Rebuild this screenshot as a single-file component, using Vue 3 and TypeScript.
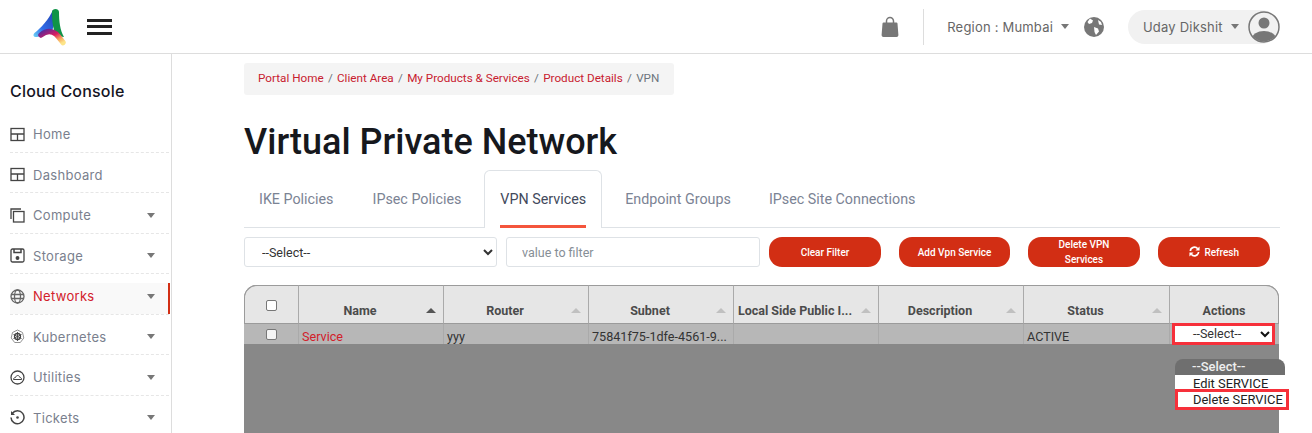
<template>
  <div class="page">
    <header class="topbar">
      <div class="brand">
        <svg class="logo" width="36" height="38" viewBox="0 0 36 38" fill="none" stroke-linecap="round">
          <defs>
            <linearGradient id="lgBlue" x1="0" y1="1" x2="1" y2="0">
              <stop offset="0" stop-color="#6fd6f7" />
              <stop offset=".35" stop-color="#2f6be8" />
              <stop offset="1" stop-color="#1f3fa8" />
            </linearGradient>
            <linearGradient id="lgRed" x1="0" y1="0" x2="1" y2="1">
              <stop offset="0" stop-color="#5b2a9a" />
              <stop offset=".45" stop-color="#d81b60" />
              <stop offset=".75" stop-color="#f7a35c" />
              <stop offset="1" stop-color="#fde58a" />
            </linearGradient>
          </defs>
          <path d="M21 2C17 11 9 20 2.500 25c-2 2-1 4.500 2.500 4 5-1 10-4 15-6L25 8z" fill="url(#lgBlue)" />
          <path d="M20 4c0-4 7-4 7 0 0 9 1 18 5 25l-7-1c-4-5-5-15-5-24z" fill="#0f9448" />
          <path d="M9 27C15 22 20 23 24 26 27 29 29 32 31 34.500" stroke="url(#lgRed)" stroke-width="5.500" />
        </svg>
        <div class="burger"><span></span><span></span><span></span></div>
      </div>
      <div class="topright">
        <svg class="bag" width="18" height="22" viewBox="0 0 18 22">
          <path d="M5.500 7V5a3.500 3.500 0 0 1 7 0v2" fill="none" stroke="#777" stroke-width="1.500" />
          <path d="M2.600 6.500h12.800c.6 0 1 .4 1.100 1l.9 11.600c0 1.200-.8 1.900-1.800 1.900H2.400c-1 0-1.800-.7-1.800-1.900l.9-11.600c.1-.6.500-1 1.100-1z" fill="#777" />
        </svg>
        <div class="vline"></div>
        <span class="region">Region : Mumbai</span>
        <i class="caret"></i>
        <svg class="earth" width="20" height="20" viewBox="0 0 20 20">
          <circle cx="10" cy="10" r="10" fill="#777" />
          <path d="M6 1.500 9 3.500 8 6 5 7 3.500 5zM10 10l4 1.500 1 3-3 3.500-1.500-3zM14 3l3 2 1 3-3-.5z" fill="#fff" />
        </svg>
        <div class="userpill">
          <span class="username">Uday Dikshit</span>
          <i class="caret"></i>
          <svg class="avatar" width="32" height="32" viewBox="0 0 32 32">
            <defs><clipPath id="avatarClip"><circle cx="16" cy="16" r="14.500" /></clipPath></defs>
            <circle cx="16" cy="16" r="15" fill="#f1f1f1" stroke="#777" stroke-width="1.500" />
            <circle cx="16" cy="12" r="5.500" fill="#777" />
            <ellipse cx="16" cy="28" rx="12" ry="8" fill="#777" clip-path="url(#avatarClip)" />
          </svg>
        </div>
      </div>
    </header>

    <div class="body">
      <aside class="sidebar">
        <h4 class="side-title">Cloud Console</h4>
        <ul class="nav">
          <li v-for="item in navItems" :key="item.label" :class="{ active: item.active }">
            <svg class="nav-icon" width="15" height="15" viewBox="0 0 15 15" fill="none" stroke="#444" stroke-width="1.300" v-html="item.icon"></svg>
            <span class="nav-label">{{ item.label }}</span>
            <i v-if="item.caret" class="caret"></i>
          </li>
        </ul>
      </aside>

      <main class="content">
        <nav class="crumbs">
          <template v-for="(c, i) in crumbs" :key="c">
            <span :class="i < crumbs.length - 1 ? 'crumb-link' : 'crumb-last'">{{ c }}</span>
            <span v-if="i < crumbs.length - 1" class="crumb-sep">/</span>
          </template>
        </nav>

        <h1 class="title">Virtual Private Network</h1>

        <div class="tabs">
          <div v-for="t in tabs" :key="t" class="tab" :class="{ current: t === 'VPN Services' }">
            <span>{{ t }}</span>
          </div>
        </div>

        <div class="filters">
          <select class="filter-select"><option>--Select--</option></select>
          <input class="filter-input" type="text" placeholder="value to filter" />
          <button class="btn">Clear Filter</button>
          <button class="btn">Add Vpn Service</button>
          <button class="btn">Delete VPN<br />Services</button>
          <button class="btn">
            <svg width="11" height="11" viewBox="0 0 12 12" fill="none" stroke="#fff" stroke-width="1.800">
              <path d="M1.500 5.500A4.500 4.500 0 0 1 9.500 3" />
              <path d="M10.500 6.500A4.500 4.500 0 0 1 2.500 9" />
              <path d="M11.500 .5v4.500H7z" fill="#fff" stroke="none" />
              <path d="M.5 11.500V7H5z" fill="#fff" stroke="none" />
            </svg>
            Refresh
          </button>
        </div>

        <div class="grid-wrap">
          <table class="grid">
            <colgroup>
              <col v-for="(w, i) in colWidths" :key="i" :style="{ width: w + 'px' }" />
            </colgroup>
            <thead>
              <tr>
                <th class="check-cell"><span class="check"></span></th>
                <th v-for="h in headers" :key="h.label" :class="{ sortable: h.sort }">
                  <span class="th-text">{{ h.label }}</span>
                  <i v-if="h.sort" class="sort" :class="{ on: h.on }"></i>
                </th>
              </tr>
            </thead>
            <tbody>
              <tr>
                <td class="check-cell"><span class="check"></span></td>
                <td class="svc">Service</td>
                <td>yyy</td>
                <td>75841f75-1dfe-4561-9...</td>
                <td></td>
                <td></td>
                <td>ACTIVE</td>
                <td class="action-cell">
                  <div class="action-select">
                    <span>--Select--</span>
                    <svg width="10" height="7" viewBox="0 0 10 7" fill="none" stroke="#111" stroke-width="2"><path d="M1 1l4 4 4-4" /></svg>
                  </div>
                </td>
              </tr>
            </tbody>
          </table>
          <div class="popup">
            <div class="popup-head">--Select--</div>
            <div class="popup-item">Edit SERVICE</div>
            <div class="popup-item marked">Delete SERVICE</div>
          </div>
        </div>
      </main>
    </div>
  </div>
</template>

<script setup lang="ts">
type NavItem = {
  label: string
  icon: string
  caret?: boolean
  active?: boolean
}

const quilt = '<rect x="1" y="1.500" width="13" height="12" /><path d="M1 7h13M7.500 7v6.500" />'

const navItems: NavItem[] = [
  { label: 'Home', icon: quilt },
  { label: 'Dashboard', icon: quilt },
  { label: 'Compute', caret: true, icon: '<rect x="3.500" y="3.500" width="10.500" height="10.500" /><path d="M1 11V1h10" />' },
  { label: 'Storage', caret: true, icon: '<rect x="1" y="1" width="13" height="13" rx="1.500" /><path d="M4 1v3.500h7V1" stroke-width="1.500" /><circle cx="7.500" cy="10" r="1.300" fill="#444" />' },
  { label: 'Networks', caret: true, active: true, icon: '<circle cx="7.500" cy="7.500" r="6.500" stroke="#666" /><ellipse cx="7.500" cy="7.500" rx="3" ry="6.500" stroke="#666" /><path d="M1 5.500h13M1 9.500h13" stroke="#666" />' },
  { label: 'Kubernetes', caret: true, icon: '<path d="M7.500 1l5 2.500 1.300 5.500-3.500 4.500H4.700L1.200 9l1.300-5.500z" stroke-width=".8" stroke="#777" /><circle cx="7.500" cy="7.500" r="3" /><path d="M7.500 3v9M3.500 5.500l8 4M11.500 5.500l-8 4" stroke-width=".9" />' },
  { label: 'Utilities', caret: true, icon: '<circle cx="7.500" cy="7.500" r="6.500" /><path d="M3.500 9.500c0-1.500 1-2 2-2 .3-1.200 1.200-2 2.200-2s2 .8 2.200 2c1 0 1.800.7 1.800 2z" stroke-width="1" />' },
  { label: 'Tickets', caret: true, icon: '<path d="M2.200 3.500A6.500 6.500 0 1 1 1 7.500" stroke-width="1.500" /><path d="M1 1v4h4z" fill="#444" stroke="none" /><circle cx="7.500" cy="7.500" r="1.300" fill="#444" stroke="none" />' },
]

const crumbs = ['Portal Home', 'Client Area', 'My Products & Services', 'Product Details', 'VPN']
const tabs = ['IKE Policies', 'IPsec Policies', 'VPN Services', 'Endpoint Groups', 'IPsec Site Connections']
const colWidths = [55, 145, 145, 145, 145, 145, 146, 109]
const headers = [
  { label: 'Name', sort: true, on: true },
  { label: 'Router', sort: true },
  { label: 'Subnet', sort: true },
  { label: 'Local Side Public I...', sort: true },
  { label: 'Description', sort: true },
  { label: 'Status', sort: true },
  { label: 'Actions', sort: false },
]
</script>

<style>
html,
body {
  margin: 0;
  background: #fff;
  overflow: hidden;
}
</style>

<style scoped>
* {
  box-sizing: border-box;
}

.page {
  height: 433px;
  overflow: hidden;
  font-family: Roboto, "Liberation Sans", sans-serif;
  display: flex;
  flex-direction: column;
}

.topbar {
  height: 54px;
  flex: none;
  border-bottom: 1px solid #ddd;
  display: flex;
  align-items: center;
  justify-content: space-between;
  padding: 0 34px 0 32px;
}

.brand {
  display: flex;
  align-items: center;
  gap: 19px;
}

.logo {
  margin-top: 1px;
}

.burger {
  width: 25px;
  display: flex;
  flex-direction: column;
  gap: 3.500px;
}

.burger span {
  height: 3px;
  background: #222;
}

.topright {
  display: flex;
  align-items: center;
  font-family: Inter, sans-serif;
  font-size: 13px;
  letter-spacing: .2px;
  color: #666;
}

.bag {
  margin-right: 24px;
}

.vline {
  width: 1px;
  height: 36px;
  background: #ddd;
  margin-right: 23px;
}

.region {
  margin-right: 8px;
  white-space: nowrap;
}

.earth {
  margin-left: 15px;
  margin-right: 24px;
}

.userpill {
  height: 34px;
  width: 150px;
  background: #f1f1f1;
  border-radius: 17px;
  display: flex;
  align-items: center;
  padding-left: 15px;
  gap: 8px;
}

.username {
  white-space: nowrap;
}

.avatar {
  flex: none;
  margin-left: 1px;
}

.caret {
  display: inline-block;
  flex: none;
  width: 0;
  height: 0;
  border-left: 4.500px solid transparent;
  border-right: 4.500px solid transparent;
  border-top: 5px solid #777;
}

.body {
  flex: 1;
  display: flex;
  min-height: 0;
}

.sidebar {
  width: 172px;
  flex: none;
  border-right: 1px solid #ddd;
  padding: 28px 2px 0 10px;
}

.side-title {
  margin: 0 0 11px;
  font-family: Inter, sans-serif;
  font-size: 16px;
  font-weight: 500;
  letter-spacing: .2px;
  line-height: 19px;
  color: #15151f;
}

.nav {
  list-style: none;
  margin: 0;
  padding: 0;
}

.nav li {
  height: 40.500px;
  display: flex;
  align-items: center;
  border-bottom: 1px dashed #e6e6e6;
  padding-top: 5px;
  position: relative;
  font-family: Inter, sans-serif;
  font-size: 13px;
  letter-spacing: .3px;
  color: #7a7f8e;
}

.nav li.active {
  color: #d2202a;
}

.nav li.active::before {
  content: "";
  position: absolute;
  left: 0;
  right: -1px;
  top: 9px;
  bottom: 0;
  background: #f9f9f9;
  border-right: 2px solid #d22e14;
}

.nav-icon {
  position: relative;
  margin-right: 8px;
  flex: none;
}

.nav-label {
  position: relative;
  flex: 1;
}

.nav li .caret {
  position: relative;
  margin-right: 14px;
}

.content {
  flex: 1;
  min-width: 0;
  padding: 9px 33px 0 72px;
}

.crumbs {
  height: 32px;
  width: 430px;
  background: #f4f4f4;
  border-radius: 3px;
  padding: 0 14px 2px;
  display: flex;
  align-items: center;
  font-size: 11.700px;
  white-space: nowrap;
}

.crumb-link {
  color: #c8202f;
}

.crumb-last {
  color: #6c757d;
}

.crumb-sep {
  color: #6c757d;
  margin: 0 4.300px;
}

.title {
  margin: 29px 0 9px;
  font-size: 36px;
  line-height: 37px;
  font-weight: 500;
  color: #16181d;
}

.tabs {
  display: flex;
  height: 58px;
  margin-right: -1px;
  border-bottom: 1px solid #dee2e6;
}

.tab {
  display: flex;
  align-items: center;
  height: 57px;
  padding: 0 15px;
  margin-right: 8px;
  font-size: 14.300px;
  color: #7b8394;
  white-space: nowrap;
}

.tab:first-child {
  margin-right: 9px;
}

.tab.current {
  height: 58px;
  position: relative;
  color: #434a5c;
  background: #fff;
  border: 1px solid #dee2e6;
  border-bottom: 0;
  border-radius: 6px 6px 0 0;
  padding-bottom: 1px;
}

.tab.current::after {
  content: "";
  position: absolute;
  left: 15px;
  right: 15px;
  bottom: 0;
  height: 3px;
  background: #f4553c;
}

.filters {
  display: flex;
  margin-top: 9px;
  height: 31px;
}

.filter-select {
  flex: none;
  width: 253px;
  height: 30px;
  border: 1px solid #dee2e6;
  border-radius: 3px;
  background: #fff;
  color: #333;
  font-family: Roboto, sans-serif;
  font-size: 12.500px;
  padding-left: 13px;
  margin-right: 9px;
}

.filter-input {
  flex: none;
  width: 254px;
  height: 30px;
  border: 1px solid #dee2e6;
  border-radius: 3px;
  padding-left: 15px;
  font-family: Roboto, sans-serif;
  font-size: 12.500px;
  margin-right: 9px;
}

.filter-input::placeholder {
  color: #868e96;
}

.btn {
  flex: none;
  width: 112px;
  height: 30px;
  border: 0;
  border-radius: 13px;
  background: #d22e14;
  color: #fff;
  font-family: Roboto, sans-serif;
  font-size: 10px;
  font-weight: 500;
  line-height: 15px;
  margin-right: 18px;
  padding: 0;
}

.btn:nth-of-type(2) {
  width: 111px;
}

.btn svg {
  vertical-align: -1.500px;
  margin-right: 2px;
}

.grid-wrap {
  position: relative;
  margin-top: 17px;
  width: 1035px;
  height: 200px;
  background: #888;
  border-radius: 13px 13px 0 0;
}

.grid {
  table-layout: fixed;
  width: 1035px;
  border-collapse: separate;
  border-spacing: 0;
  font-size: 12.600px;
}

.grid th {
  height: 39px;
  background: #e6e6e6;
  border-top: 1px solid #9b9b9b;
  border-right: 1px solid #aaa;
  border-bottom: 1px solid #9b9b9b;
  padding: 11px 0 0;
  position: relative;
  color: #4b4b4b;
  font-weight: 700;
  font-size: 12.500px;
  white-space: nowrap;
}

.grid th.sortable {
  padding-right: 22px;
}

.grid th:first-child {
  border-left: 1px solid #9b9b9b;
  border-top-left-radius: 13px;
}

.grid th:last-child {
  border-right: 1px solid #9b9b9b;
  border-top-right-radius: 13px;
}

.sort {
  position: absolute;
  right: 7px;
  top: 22px;
  width: 0;
  height: 0;
  border-left: 5px solid transparent;
  border-right: 5px solid transparent;
  border-bottom: 5px solid #c0c0c0;
}

.sort.on {
  border-bottom-color: #555;
}

.grid td {
  height: 20px;
  background: #b7b7b7;
  border-right: 1px solid #aaa;
  padding: 5px 0 0 3px;
  color: #333;
  line-height: 15px;
  white-space: nowrap;
  overflow: hidden;
  vertical-align: top;
}

.grid td.svc {
  color: #d2202a;
}

.grid td.check-cell,
.grid th.check-cell {
  text-align: center;
}

.grid td.check-cell {
  padding: 0;
}

.grid th.check-cell {
  padding-top: 8px;
}

.check {
  display: inline-block;
  width: 11px;
  height: 11px;
  background: #fff;
  border: 1px solid #777;
  border-radius: 2px;
}

.grid th .check {
  vertical-align: 3px;
}

.grid td .check {
  vertical-align: top;
  margin-top: 5px;
  background: #f4f4f4;
}

.grid td.action-cell {
  overflow: visible;
  padding: 0;
  border-right: 0;
  position: relative;
}

.action-select {
  position: absolute;
  left: 2px;
  top: -1px;
  width: 103px;
  height: 22px;
  border: 3px solid #f6303a;
  background: #fff;
  display: flex;
  align-items: center;
  justify-content: space-between;
  padding: 0 2px 0 18px;
  font-size: 12.500px;
  line-height: 14px;
  color: #333;
}

.popup {
  position: absolute;
  left: 931px;
  top: 74px;
  width: 110px;
  font-size: 12.900px;
  line-height: 15px;
  color: #222;
}

.popup-head {
  height: 16px;
  background: #6f6f6f;
  color: #eee;
  border-radius: 8px 8px 0 0;
  padding-left: 17px;
  line-height: 16px;
  font-weight: 500;
}

.popup-item {
  height: 15px;
  background: #fff;
  padding-left: 18px;
  line-height: 17px;
  white-space: nowrap;
}

.popup-item.marked {
  width: 114px;
  height: 21px;
  border: 3px solid #f6303a;
  padding-left: 15px;
  margin-top: -1px;
  line-height: 15px;
}
</style>
